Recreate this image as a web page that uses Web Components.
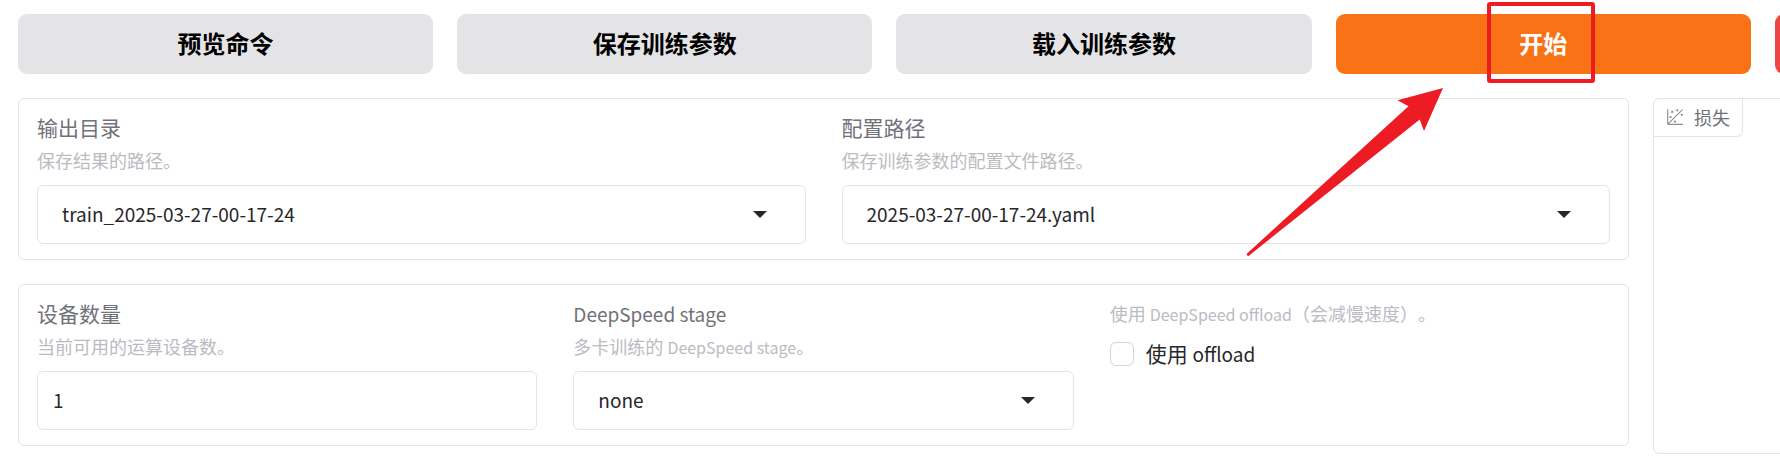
<!DOCTYPE html>
<html lang="zh-CN">
<head>
<meta charset="utf-8">
<meta name="viewport" content="width=device-width, initial-scale=1">
<title>训练</title>
<style>
  html { overflow-x: clip; }
  body {
    margin: 0;
    overflow-x: clip;
    background: #fff;
    color: #27272a;
    font-family: "Noto Sans CJK SC", sans-serif;
    text-spacing-trim: space-all;
    --line: #e4e4e7;
    --title: #71717a;
    --help: #bbbbc2;
  }
  .en, .en-s { line-height: 1; }
  .en { font-size: 19px; }
  .en-s { font-size: 16px; }
</style>
</head>
<body>
<train-board>
  <action-button slot="actions">预览命令</action-button>
  <action-button slot="actions">保存训练参数</action-button>
  <action-button slot="actions">载入训练参数</action-button>
  <action-button slot="actions" variant="primary">开始<click-hint slot="over"></click-hint></action-button>
  <action-button slot="actions" variant="stop" label="中断"></action-button>

  <field-panel slot="forms">
    <select-field value="train_2025-03-27-00-17-24">输出目录<span slot="help">保存结果的路径。</span></select-field>
    <select-field value="2025-03-27-00-17-24.yaml">配置路径<span slot="help">保存训练参数的配置文件路径。</span></select-field>
  </field-panel>
  <field-panel slot="forms">
    <text-field value="1">设备数量<span slot="help">当前可用的运算设备数。</span></text-field>
    <select-field value="none"><span class="en">DeepSpeed stage</span><span slot="help">多卡训练的 <span class="en-s">DeepSpeed stage</span>。</span></select-field>
    <check-field>使用 <span class="en">offload</span><span slot="help">使用 <span class="en-s">DeepSpeed offload</span>（会减慢速度）。</span></check-field>
  </field-panel>

  <plot-card slot="plot">损失</plot-card>
</train-board>

<script>
  const define = (name, html, setup) => {
    const template = document.createElement('template');
    template.innerHTML = html;
    customElements.define(name, class extends HTMLElement {
      constructor() {
        super();
        this.attachShadow({ mode: 'open' }).append(template.content.cloneNode(true));
      }
      connectedCallback() {
        if (setup) setup(this, this.shadowRoot);
      }
    });
  };

  const fieldStyles = `
    :host { display: flex; flex-direction: column; flex: 1; min-width: 0; }
    label, .help { display: block; line-height: 24px; white-space: nowrap; }
    .title { font-size: 21px; color: var(--title); }
    .help { font-size: 18px; color: var(--help); }
    .title + .help { margin: 9px 0 13px; }
    input, select {
      box-sizing: border-box; margin: 0; width: 100%; height: 59px;
      font-family: inherit; font-size: 19px; color: inherit;
      background: #fff; border: 1px solid var(--line); border-radius: 6px;
    }`;

  define('train-board', `
    <style>
      :host { display: block; box-sizing: border-box; width: calc(125% - 17px); padding: 14px 18px 4px; }
      .actions { display: flex; gap: 24px; }
      .main { display: flex; align-items: flex-start; gap: 24px; margin-top: 24px; }
      .forms { display: flex; flex-direction: column; gap: 24px; flex: 3; min-width: 0; }
      .plot { flex: 1; min-width: 0; }
    </style>
    <div class="actions"><slot name="actions"></slot></div>
    <div class="main">
      <div class="forms"><slot name="forms"></slot></div>
      <div class="plot"><slot name="plot"></slot></div>
    </div>`);

  define('action-button', `
    <style>
      :host { display: block; position: relative; flex: 1; min-width: 0; --bg: #e4e4e7; --fg: #000; }
      :host([variant=primary]) { --bg: #f97316; --fg: #fff; }
      :host([variant=stop]) { --bg: #ef4444; --fg: #fff; }
      button {
        display: block; width: 100%; height: 60px; padding: 0 0 3px; border: 0; border-radius: 9px;
        background: var(--bg); color: var(--fg);
        font-family: inherit; font-size: 24px; font-weight: 700; line-height: 36px;
      }
    </style>
    <button type="button"><slot></slot></button>
    <slot name="over"></slot>`, (host, root) => {
      if (host.hasAttribute('label')) root.querySelector('button').setAttribute('aria-label', host.getAttribute('label'));
    });

  define('click-hint', `
    <style>
      :host { position: absolute; left: calc(50% - 297px); top: -12px; z-index: 1; pointer-events: none; }
      svg { display: block; }
    </style>
    <svg width="350" height="256" viewBox="0 0 350 256" fill="#ed1c24" aria-hidden="true">
      <rect x="243" y="2" width="104" height="77" rx="1" fill="none" stroke="#ed1c24" stroke-width="4"/>
      <path d="M197 86 151.500 98.300 162.500 104.300 1 251.500Q0 253.500 2.500 254L173.700 117.500 178 129Z"/>
    </svg>`);

  define('field-panel', `
    <style>
      :host { display: flex; align-items: flex-start; gap: 36px; padding: 16px 18px 15px; border: 1px solid var(--line); border-radius: 6px; }
    </style>
    <slot></slot>`);

  define('select-field', `
    <style>${fieldStyles}
      .box { display: grid; align-items: center; }
      .box > * { grid-area: 1 / 1; }
      select { appearance: none; padding: 0 60px 2px 24px; }
      svg { justify-self: end; margin-right: 39px; pointer-events: none; }
    </style>
    <label class="title" for="control"><slot></slot></label>
    <div class="help"><slot name="help"></slot></div>
    <div class="box">
      <select id="control"><option></option></select>
      <svg width="14" height="7" viewBox="0 0 14 7" fill="#27272a" aria-hidden="true"><path d="M0 0H14L7 7Z"/></svg>
    </div>`, (host, root) => {
      root.querySelector('option').textContent = host.getAttribute('value');
    });

  define('text-field', `
    <style>${fieldStyles}
      input { padding: 0 15px 2px; }
    </style>
    <label class="title" for="control"><slot></slot></label>
    <div class="help"><slot name="help"></slot></div>
    <input id="control" type="text" inputmode="numeric">`, (host, root) => {
      root.querySelector('input').value = host.getAttribute('value');
    });

  define('check-field', `
    <style>${fieldStyles}
      label { display: flex; align-items: center; gap: 12px; margin-top: 17px; font-size: 21px; }
      input { appearance: none; flex: none; width: 24px; height: 24px; border-color: #d4d4d8; }
      input:checked { background: #f97316; }
      label span { margin-top: -2px; }
    </style>
    <div class="help" id="help"><slot name="help"></slot></div>
    <label for="control"><input id="control" type="checkbox" aria-describedby="help"><span><slot></slot></span></label>`);

  define('plot-card', `
    <style>
      :host { display: block; box-sizing: border-box; min-height: 356px; border: 1px solid var(--line); border-radius: 6px; }
      .tab {
        display: inline-flex; align-items: center; gap: 10px; padding: 6px 12px 7px; vertical-align: top;
        border: solid var(--line); border-width: 0 1px 1px 0; border-radius: 0 0 6px 0;
        color: var(--title); font-size: 18px; line-height: 24px;
      }
      svg { opacity: .8; }
    </style>
    <div class="tab">
      <svg width="18" height="18" viewBox="0 0 32 32" fill="currentColor" aria-hidden="true">
        <circle cx="20" cy="4" r="2"/><circle cx="8" cy="16" r="2"/><circle cx="28" cy="12" r="2"/><circle cx="11" cy="7" r="2"/><circle cx="16" cy="24" r="2"/>
        <path d="M30 3.413 28.586 2 4 26.585V2H2v26a2 2 0 0 0 2 2h26v-2H5.413Z"/>
      </svg>
      <slot></slot>
    </div>`);
</script>
</body>
</html>
